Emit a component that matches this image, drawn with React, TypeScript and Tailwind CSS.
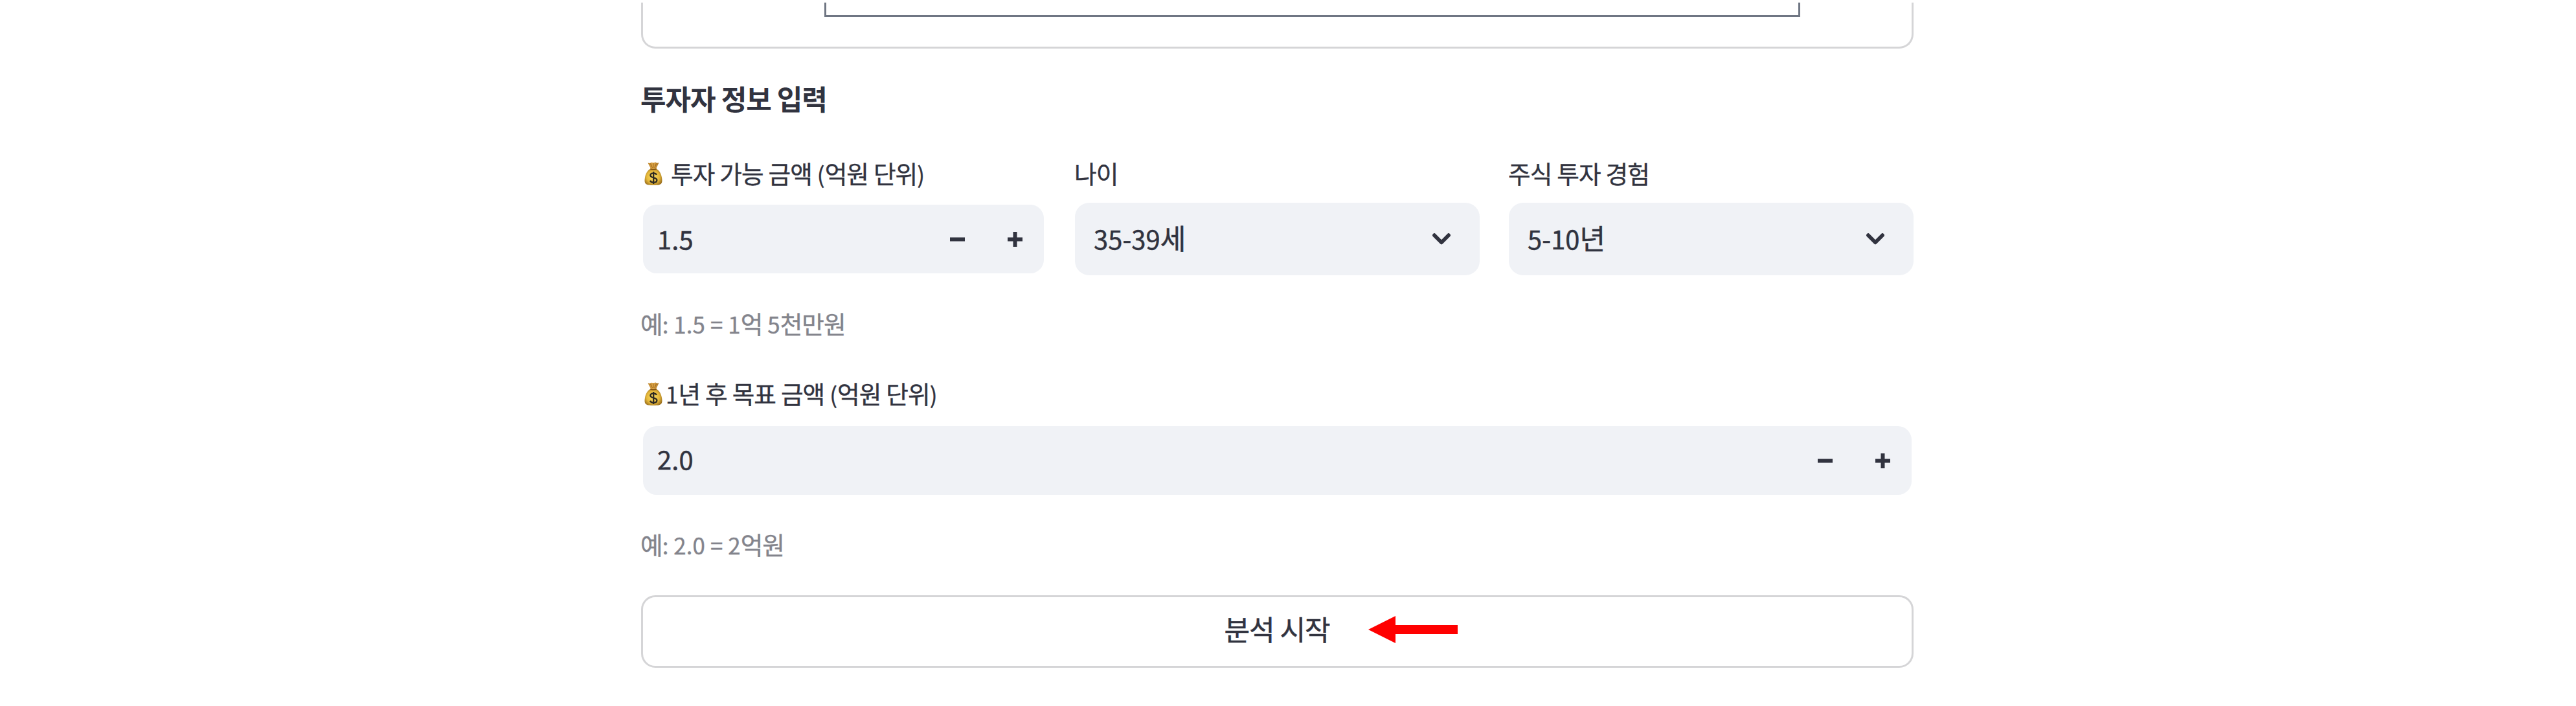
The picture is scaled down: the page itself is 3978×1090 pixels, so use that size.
import React from "react";

// Hangul and Latin runs take slightly different sizes so that they sit evenly together.
function Text({ children }: { children: string }) {
  const runs = children.match(/[가-힣]+|[^가-힣]+/g) ?? [];
  return (
    <span className="-ml-px whitespace-pre">
      {runs.map((run, i) =>
        /[가-힣]/.test(run) ? (
          <span key={i} className="text-[0.965em] leading-[0] tracking-[-0.025em]">{run}</span>
        ) : (
          <span key={i} className="text-[0.893em] leading-[0] tracking-[0.003em]">{run}</span>
        ),
      )}
    </span>
  );
}

function MoneyBag({ className }: { className: string }) {
  return (
    <svg viewBox="0 0 28 36" className={className}>
      <defs>
        <radialGradient id="bag" cx="0.48" cy="0.5" r="0.6">
          <stop offset="0" stopColor="#f9dc62" />
          <stop offset="0.6" stopColor="#e6b93c" />
          <stop offset="1" stopColor="#94681a" />
        </radialGradient>
        <linearGradient id="neck" x1="0" x2="1">
          <stop offset="0" stopColor="#b98025" />
          <stop offset="0.5" stopColor="#e2a94a" />
          <stop offset="1" stopColor="#a97322" />
        </linearGradient>
      </defs>
      <path d="M5.5 1.5 8.5 2 11 .7 14 1.2 17.5.5 19.5 1.7 22.5 1.2 18.6 9.5 19 12H9.3l.3-2.5Z" fill="url(#neck)" />
      <path d="M9.5 2.5 12.5 9M14 2v7M18.5 2.5 15.8 9" stroke="#8a5a17" strokeWidth=".8" fill="none" />
      <path d="M9.5 10.5h9c4.500 2.500 7.500 7.500 8.500 13.500.7 4.500 1 8-1.500 10C23.500 35.800 19 36 14 36S4.500 35.800 2.500 34C0 32 .3 28.500 1 24 2 18 5 13 9.500 10.500Z" fill="url(#bag)" />
      <path d="M9.300 10.800c3 1.200 6.400 1.200 9.400 0" stroke="#7c4d14" strokeWidth="1.300" fill="none" />
      <path d="M19 19.800c-.9-1.700-2.700-2.500-4.800-2.500-2.800 0-4.800 1.400-4.800 3.500 0 4.700 10 2.300 10 7.200 0 2.200-2.100 3.700-5.100 3.700-2.500 0-4.500-1-5.300-3M14.200 15v19" stroke="#2e2a22" strokeWidth="2.300" fill="none" />
    </svg>
  );
}

const label = "flex h-[60px] items-center text-[39px] leading-[60px] [-webkit-text-stroke:0.4px_#31333f]";
const caption = "h-[60px] text-[39px] text-[#83848c] [-webkit-text-stroke:0.4px_#83848c]";

function Steppers() {
  return (
    <div className="flex items-center gap-[66px] pr-[33px]">
      <svg viewBox="0 0 23 23" className="size-[23px]" fill="#31333f">
        <path d="M0 8.500h23v6H0z" />
      </svg>
      <svg viewBox="0 0 23 23" className="size-[23px]" fill="#31333f">
        <path d="M0 8.500h8.500V0h6v8.500H23v6h-8.500V23h-6v-8.500H0z" />
      </svg>
    </div>
  );
}

function NumberField({ value, shift }: { value: string; shift: string }) {
  return (
    <div className="mx-[3px] flex h-[106px] items-center justify-between rounded-[21px] bg-[#f0f2f6] pl-[23px] [-webkit-text-stroke:0.5px_#31333f]">
      <span className={shift}>
        <Text>{value}</Text>
      </span>
      <Steppers />
    </div>
  );
}

function SelectField({ value }: { value: string }) {
  return (
    <div className="flex h-[112px] items-center justify-between rounded-[22px] bg-[#f0f2f6] pl-[30px] pr-[45px] [-webkit-text-stroke:0.5px_#31333f]">
      <span className="pb-[7px]">
        <Text>{value}</Text>
      </span>
      <svg viewBox="0 0 28 18" className="h-[18px] w-[28px]" fill="none" stroke="#31333f" strokeWidth="5.800" strokeLinecap="round" strokeLinejoin="round">
        <path d="M3 3.200 14 14.300 25 3.200" />
      </svg>
    </div>
  );
}

export default function App() {
  return (
    <main className="h-[1090px] overflow-hidden bg-white pl-[990px] pt-1 font-['Noto_Sans_CJK_KR',sans-serif] text-[44.600px] leading-[60px] text-[#31333f]">
      <div className="w-[1965px]">
        <div className="h-[71px] rounded-b-[22px] border-[3px] border-t-0 border-[#d5d5d7] pl-[280px]">
          <div className="h-[22px] w-[1507px] border-[3px] border-t-0 border-[#6f7683]" />
        </div>

        <h2 className="mt-[46px] h-[60px] font-bold">
          <Text>투자자 정보 입력</Text>
        </h2>

        <div className="mt-[55px] grid grid-cols-3 gap-[45px]">
          <div>
            <div className={label}>
              <MoneyBag className="ml-[5px] mr-[14px] mt-[3px] h-[36px] w-[28px]" />
              <Text>투자 가능 금액 (억원 단위)</Text>
            </div>
            <div className="pt-5">
              <NumberField value="1.5" shift="pb-[7px]" />
            </div>
          </div>
          <div>
            <div className={label}>
              <Text>나이</Text>
            </div>
            <div className="pt-[17px]">
              <SelectField value="35-39세" />
            </div>
          </div>
          <div>
            <div className={label}>
              <Text>주식 투자 경험</Text>
            </div>
            <div className="pt-[17px]">
              <SelectField value="5-10년" />
            </div>
          </div>
        </div>

        <p className={`mt-[43px] ${caption}`}>
          <Text>예: 1.5 = 1억 5천만원</Text>
        </p>

        <div className="mt-[48px]">
          <div className={label}>
            <MoneyBag className="ml-[5px] mr-[6px] mt-[3px] h-[36px] w-[28px]" />
            <Text>1년 후 목표 금액 (억원 단위)</Text>
          </div>
          <div className="pt-[22px]">
            <NumberField value="2.0" shift="pb-[10px]" />
          </div>
        </div>

        <p className={`mt-[45px] ${caption}`}>
          <Text>예: 2.0 = 2억원</Text>
        </p>

        <button className="relative mt-[50px] flex h-[112px] w-full items-center justify-center rounded-[22px] border-[3px] border-[#d5d5d7] pb-[11px] [-webkit-text-stroke:0.5px_#31333f]">
          <Text>분석 시작</Text>
          <svg viewBox="0 0 138 42" className="absolute left-[1120px] top-[29px] h-[42px] w-[138px]" fill="#ff0000">
            <path d="M0 21 42 0v14h96v14H42v14z" />
          </svg>
        </button>
      </div>
    </main>
  );
}
